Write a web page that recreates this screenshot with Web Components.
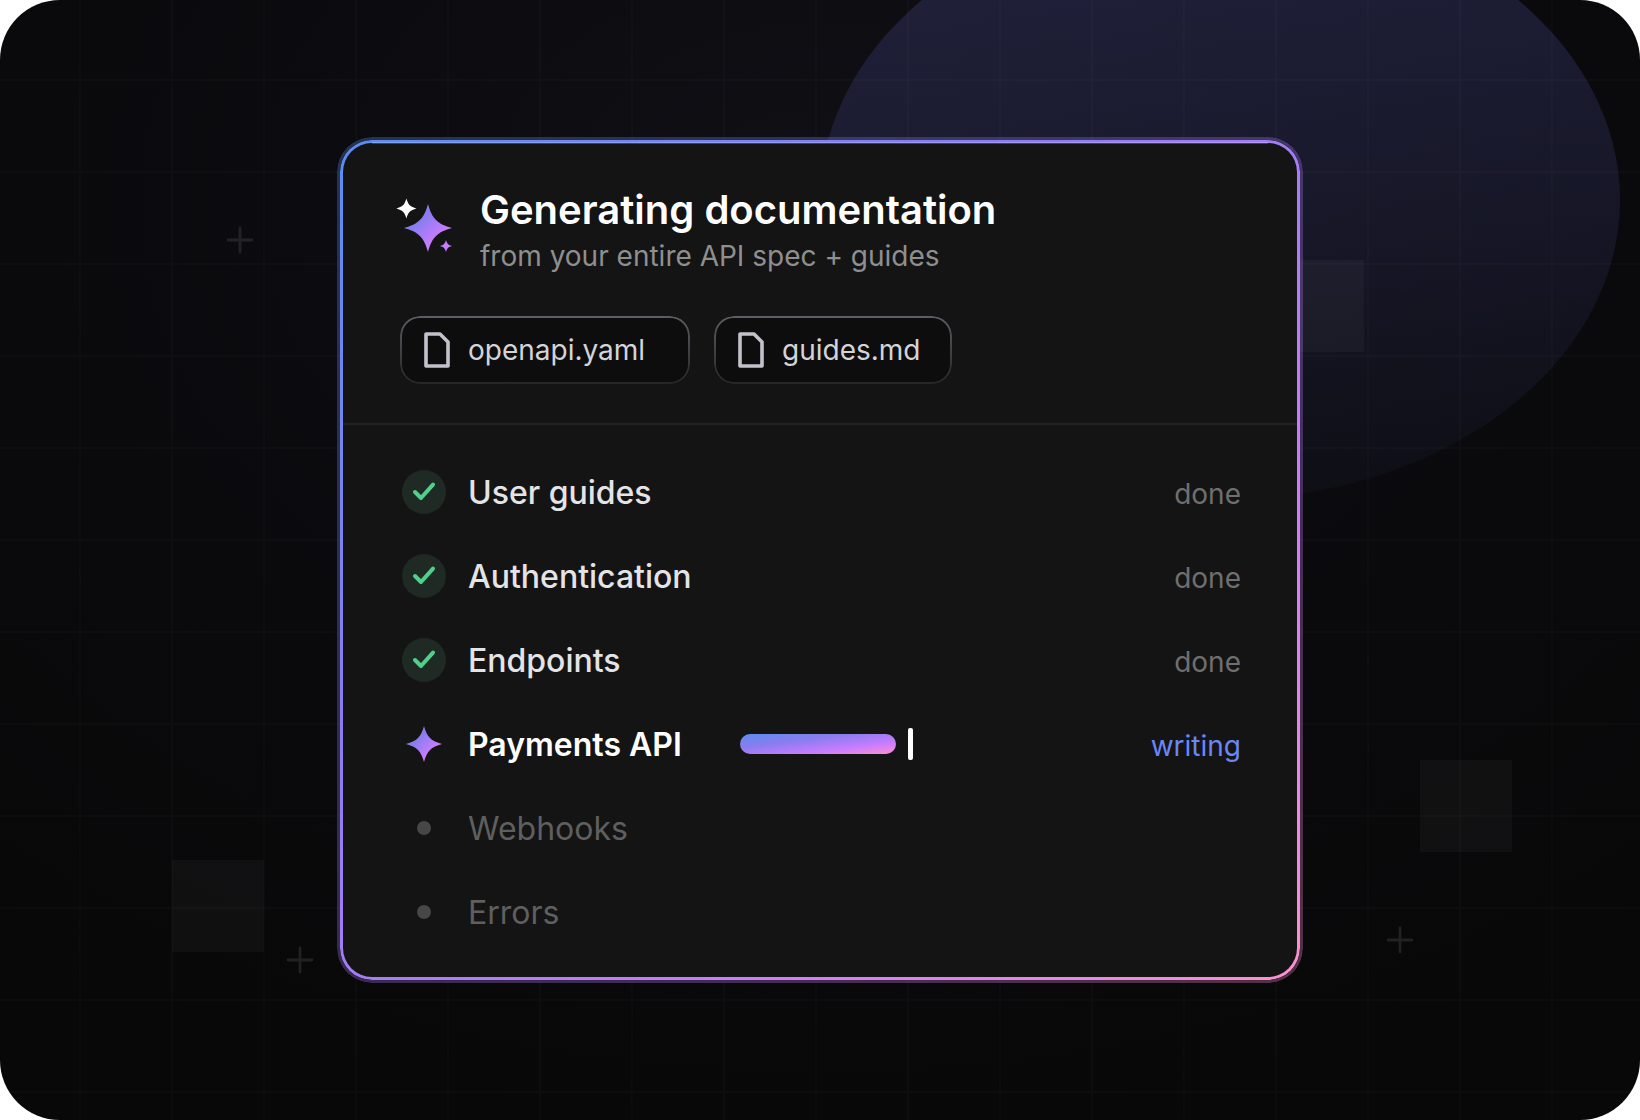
<!DOCTYPE html>
<html lang="en">
<head>
	<meta charset="utf-8">
	<meta name="viewport" content="width=device-width, initial-scale=1">
	<title>Generating documentation</title>
	<style type="text/css">
		body {
			margin: 0;
			background: #fff;
			font-family: Inter, "Liberation Sans", sans-serif;
			--brand: linear-gradient(to bottom right, #5b8def 0%, #8b7cf0 35%, #c77dff 70%, #ff8fd0 100%);
		}
	</style>
</head>
<body>
	<doc-scene>
		<doc-card>
			<spark-icon slot="icon"></spark-icon>
			<span slot="title">Generating documentation</span>
			<span slot="subtitle">from your entire API spec + guides</span>
			<file-chip slot="files" style="--chip-width: 290px">openapi.yaml</file-chip>
			<file-chip slot="files" style="--chip-width: 238px">guides.md</file-chip>
			<task-row state="done">User guides</task-row>
			<task-row state="done">Authentication</task-row>
			<task-row state="done">Endpoints</task-row>
			<task-row state="writing">Payments API</task-row>
			<task-row state="queued">Webhooks</task-row>
			<task-row state="queued">Errors</task-row>
		</doc-card>
	</doc-scene>

	<script>
	// four-pointed star around (x, y)
	const star = (x, y, r) => {
		const a = r * 0.16, b = r * 0.4;
		return `M${x} ${y - r}
			C${x + a} ${y - b} ${x + b} ${y - a} ${x + r} ${y}
			C${x + b} ${y + a} ${x + a} ${y + b} ${x} ${y + r}
			C${x - a} ${y + b} ${x - b} ${y + a} ${x - r} ${y}
			C${x - b} ${y - a} ${x - a} ${y - b} ${x} ${y - r}Z`;
	};

	const sparkGradient = `
		<defs>
			<linearGradient id="spark" x1="0" y1="0" x2="1" y2="1">
				<stop offset="0" stop-color="#5b8def"/>
				<stop offset="0.35" stop-color="#8b7cf0"/>
				<stop offset="0.7" stop-color="#c77dff"/>
				<stop offset="1" stop-color="#ff8fd0"/>
			</linearGradient>
		</defs>`;

	customElements.define('doc-scene', class extends HTMLElement {
	  connectedCallback() {
	    this.attachShadow({mode: 'open'});
	    this.shadowRoot.innerHTML = `
	    	<style>
	    		:host {
	    			display: grid;
	    			place-items: center;
	    			position: relative;
	    			box-sizing: border-box;
	    			min-height: 100vh;
	    			padding: 40px;
	    			overflow: hidden;
	    			border-radius: 60px;
	    			background: radial-gradient(ellipse 80% 85% at 50% 18%, #0f0f15, #0a0a0d 60%, #080808);
	    		}
	    		svg {
	    			position: absolute;
	    			inset: 0;
	    			width: 100%;
	    			height: 100%;
	    		}
	    		slot {
	    			display: block;
	    			position: relative;
	    			width: 100%;
	    			max-width: 960px;
	    		}
	    	</style>
	    	<svg viewBox="0 0 1640 1120" preserveAspectRatio="xMidYMid slice" aria-hidden="true">
	    		<defs>
	    			<linearGradient id="glow" x1="0" y1="0" x2="0" y2="1">
	    				<stop offset="0" stop-color="#7478f0" stop-opacity="0.2"/>
	    				<stop offset="1" stop-color="#7478f0" stop-opacity="0.03"/>
	    			</linearGradient>
	    			<pattern id="grid" x="80" y="80" width="92" height="92" patternUnits="userSpaceOnUse">
	    				<path d="M0 0H92M0 92H92M0 0V92M92 0V92" stroke="#fff" stroke-opacity="0.014" stroke-width="2"/>
	    			</pattern>
	    		</defs>
	    		<ellipse cx="1220" cy="200" rx="400" ry="300" fill="url(#glow)"/>
	    		<rect width="1640" height="1120" fill="url(#grid)"/>
	    		<g fill="#fff" fill-opacity="0.035">
	    			<rect x="172" y="860" width="92" height="92"/>
	    			<rect x="1272" y="260" width="92" height="92"/>
	    			<rect x="1420" y="760" width="92" height="92"/>
	    		</g>
	    		<path d="M240 228v24M228 240h24M300 948v24M288 960h24M1400 928v24M1388 940h24" stroke="#fff" stroke-opacity="0.1" stroke-width="2.8" stroke-linecap="round"/>
	    	</svg>
	    	<slot></slot>
	    `;
	  }
	});

	customElements.define('doc-card', class extends HTMLElement {
	  connectedCallback() {
	    this.attachShadow({mode: 'open'});
	    this.shadowRoot.innerHTML = `
	    	<style>
	    		:host {
	    			display: block;
	    			position: relative;
	    			border-radius: 32px;
	    			background: #141414;
	    		}
	    		/* solid gradient rim, then a faint one around it */
	    		:host::before, :host::after {
	    			content: "";
	    			position: absolute;
	    			inset: 0;
	    			padding: 3px;
	    			border-radius: 32px;
	    			background: var(--brand);
	    			-webkit-mask: linear-gradient(#000 0 0) content-box exclude, linear-gradient(#000 0 0);
	    			mask: linear-gradient(#000 0 0) content-box exclude, linear-gradient(#000 0 0);
	    			pointer-events: none;
	    		}
	    		:host::after {
	    			inset: -3px;
	    			border-radius: 35px;
	    			opacity: 0.3;
	    		}
	    		.shine {
	    			position: absolute;
	    			top: 2px;
	    			left: 32px;
	    			right: 32px;
	    			height: 2px;
	    			background: rgba(255, 255, 255, 0.2);
	    			z-index: 1;
	    		}
	    		header {
	    			padding: 46px 60px 39px;
	    			border-bottom: 2px solid #222;
	    		}
	    		.heading {
	    			display: flex;
	    			gap: 16px;
	    		}
	    		h1, p {
	    			margin: 0;
	    		}
	    		h1 {
	    			font-size: 40px;
	    			line-height: 48px;
	    			font-weight: 600;
	    			color: #fff;
	    		}
	    		p {
	    			font-size: 28px;
	    			line-height: 44px;
	    			color: #8f8f8f;
	    		}
	    		.files {
	    			display: flex;
	    			flex-wrap: wrap;
	    			gap: 24px;
	    			margin-top: 38px;
	    		}
	    		.tasks {
	    			padding: 25px 59px 26px 60px;
	    		}
	    	</style>
	    	<div class="shine"></div>
	    	<header>
	    		<div class="heading">
	    			<slot name="icon"></slot>
	    			<div>
	    				<h1><slot name="title"></slot></h1>
	    				<p><slot name="subtitle"></slot></p>
	    			</div>
	    		</div>
	    		<div class="files"><slot name="files"></slot></div>
	    	</header>
	    	<div class="tasks" role="list"><slot></slot></div>
	    `;
	  }
	});

	customElements.define('spark-icon', class extends HTMLElement {
	  connectedCallback() {
	    this.attachShadow({mode: 'open'});
	    this.shadowRoot.innerHTML = `
	    	<style>
	    		:host {
	    			display: block;
	    			width: 64px;
	    			height: 92px;
	    		}
	    		svg {
	    			display: block;
	    			overflow: visible;
	    		}
	    	</style>
	    	<svg width="64" height="92" viewBox="0 0 64 92" aria-hidden="true">
	    		${sparkGradient}
	    		<path d="${star(28, 42, 24)}" fill="url(#spark)"/>
	    		<path d="${star(6.4, 22.6, 10)}" fill="#fff"/>
	    		<path d="${star(46, 60, 6)}" fill="#c77dff"/>
	    	</svg>
	    `;
	  }
	});

	customElements.define('file-chip', class extends HTMLElement {
	  connectedCallback() {
	    this.attachShadow({mode: 'open'});
	    this.shadowRoot.innerHTML = `
	    	<style>
	    		:host {
	    			display: flex;
	    			align-items: center;
	    			gap: 18px;
	    			box-sizing: border-box;
	    			min-width: var(--chip-width, auto);
	    			height: 68px;
	    			padding: 0 24px;
	    			position: relative;
	    			border-radius: 20px;
	    			background: #0d0d0d;
	    			color: #d4d4d8;
	    			font-size: 28px;
	    			line-height: 40px;
	    		}
	    		:host::before {
	    			content: "";
	    			position: absolute;
	    			inset: 0;
	    			padding: 2px;
	    			border-radius: 20px;
	    			background: linear-gradient(#5e5c66, #262626);
	    			-webkit-mask: linear-gradient(#000 0 0) content-box exclude, linear-gradient(#000 0 0);
	    			mask: linear-gradient(#000 0 0) content-box exclude, linear-gradient(#000 0 0);
	    		}
	    	</style>
	    	<svg width="26" height="36" viewBox="0 0 26 36" fill="none" aria-hidden="true">
	    		<path d="M2 2H16L24 10V34H2Z" stroke="#c4c1cb" stroke-width="3.6" stroke-linejoin="round"/>
	    	</svg>
	    	<span><slot></slot></span>
	    `;
	  }
	});

	const marks = {
		done: `<circle cx="24" cy="24" r="22" fill="#1e2a23"/>
			<path d="M15 24L21 30L33 16.6" stroke="#4fd18b" stroke-width="4" stroke-linecap="round" stroke-linejoin="round"/>`,
		writing: `${sparkGradient}<path d="${star(24, 24, 18)}" fill="url(#spark)"/>`,
		queued: `<circle cx="24" cy="24" r="7" fill="#474747"/>`
	};

	customElements.define('task-row', class extends HTMLElement {
	  connectedCallback() {
	    const state = this.getAttribute('state');
	    this.setAttribute('role', 'listitem');
	    this.attachShadow({mode: 'open'});
	    this.shadowRoot.innerHTML = `
	    	<style>
	    		:host {
	    			display: flex;
	    			align-items: center;
	    			gap: 20px;
	    			height: 84px;
	    			color: #e4e4e7;
	    			font-size: 32px;
	    			line-height: 40px;
	    			font-weight: 500;
	    		}
	    		:host([state="writing"]) {
	    			color: #fff;
	    			font-weight: 600;
	    		}
	    		:host([state="queued"]) {
	    			color: #5f5f5f;
	    			font-weight: 400;
	    		}
	    		.line {
	    			flex: 1;
	    			display: flex;
	    			align-items: baseline;
	    		}
	    		.label, .status {
	    			padding-top: 2px;
	    		}
	    		.status {
	    			margin-left: auto;
	    			color: #6f6f6f;
	    			font-size: 28px;
	    			font-weight: 400;
	    		}
	    		:host([state="writing"]) .status {
	    			color: #6b86f5;
	    		}
	    		.typing {
	    			display: flex;
	    			align-self: center;
	    			align-items: center;
	    			gap: 12px;
	    			margin-left: 58px;
	    		}
	    		.bar {
	    			width: 156px;
	    			height: 20px;
	    			border-radius: 10px;
	    			background: var(--brand);
	    		}
	    		.caret {
	    			width: 5px;
	    			height: 32px;
	    			border-radius: 2px;
	    			background: #fff;
	    		}
	    	</style>
	    	<svg width="48" height="48" viewBox="0 0 48 48" fill="none" aria-hidden="true">${marks[state]}</svg>
	    	<div class="line">
	    		<span class="label"><slot></slot></span>
	    		${state === 'writing' ? '<div class="typing"><div class="bar"></div><div class="caret"></div></div>' : ''}
	    		${state === 'queued' ? '' : `<span class="status">${state}</span>`}
	    	</div>
	    `;
	  }
	});
	</script>
</body>
</html>
